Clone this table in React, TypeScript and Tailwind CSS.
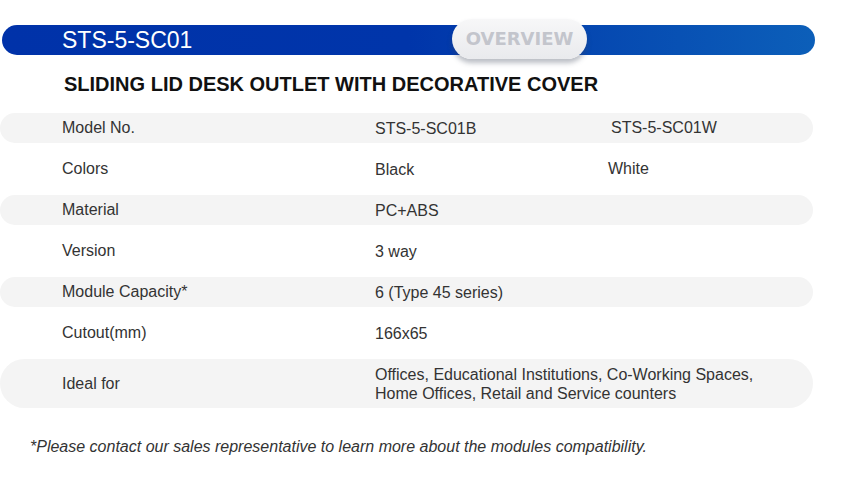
import React from "react";

const rows: { label: string; a: string; b?: string; tall?: boolean }[] = [
  { label: "Model No.", a: "STS-5-SC01B", b: "STS-5-SC01W" },
  { label: "Colors", a: "Black", b: "White" },
  { label: "Material", a: "PC+ABS" },
  { label: "Version", a: "3 way" },
  { label: "Module Capacity*", a: "6 (Type 45 series)" },
  { label: "Cutout(mm)", a: "166x65" },
  {
    label: "Ideal for",
    a: "Offices, Educational Institutions, Co-Working Spaces,\nHome Offices, Retail and Service counters",
    tall: true,
  },
];

export default function App() {
  return (
    <div
      className="w-[850px] h-[478px] bg-white text-[#333] overflow-hidden"
      style={{ fontFamily: '"Liberation Sans", Arial, sans-serif' }}
    >
      <div className="pt-[25px] pl-[2px] w-[815px]">
        <div className="relative h-[30px] rounded-full bg-[linear-gradient(90deg,#0032a9_0%,#0035aa_50%,#0c5fb9_100%)] flex items-center">
          <span className="pl-[60px] text-white text-[23px] leading-none">STS-5-SC01</span>
          <div className="absolute left-[450px] top-[-6px] w-[135px] h-[40px] rounded-full bg-[linear-gradient(180deg,#f7f7f8_0%,#e9eaed_100%)] shadow-[0_4px_5px_rgba(60,70,90,0.35)] flex items-center justify-center">
            <span
              className="text-[18px] font-bold text-[#c3c5cc] leading-none"
              style={{ fontFamily: '"DejaVu Sans", Verdana, sans-serif' }}
            >
              OVERVIEW
            </span>
          </div>
        </div>
      </div>
      <h1 className="mt-[19px] pl-[64px] text-[20px] font-bold text-[#111] leading-none">
        SLIDING LID DESK OUTLET WITH DECORATIVE COVER
      </h1>
      <div className="mt-[19px] w-[813px] flex flex-col gap-[11px]">
        {rows.map((r, i) => (
          <div
            key={r.label}
            className={`flex items-center rounded-full text-[16px] ${
              i % 2 === 0 ? "bg-[#f4f4f4]" : "bg-white"
            } ${r.tall ? "h-[49px]" : "h-[30px]"}`}
          >
            <div className="w-[375px] pl-[62px]">{r.label}</div>
            <div className="w-[232px] whitespace-pre leading-[19px]">{r.a}</div>
            {r.b && <div className={i === 0 ? "pl-[4px]" : "pl-[1px]"}>{r.b}</div>}
          </div>
        ))}
      </div>
      <p className="mt-[27px] pl-[30px] italic text-[16px] text-[#333]">
        *Please contact our sales representative to learn more about the modules compatibility.
      </p>
    </div>
  );
}
